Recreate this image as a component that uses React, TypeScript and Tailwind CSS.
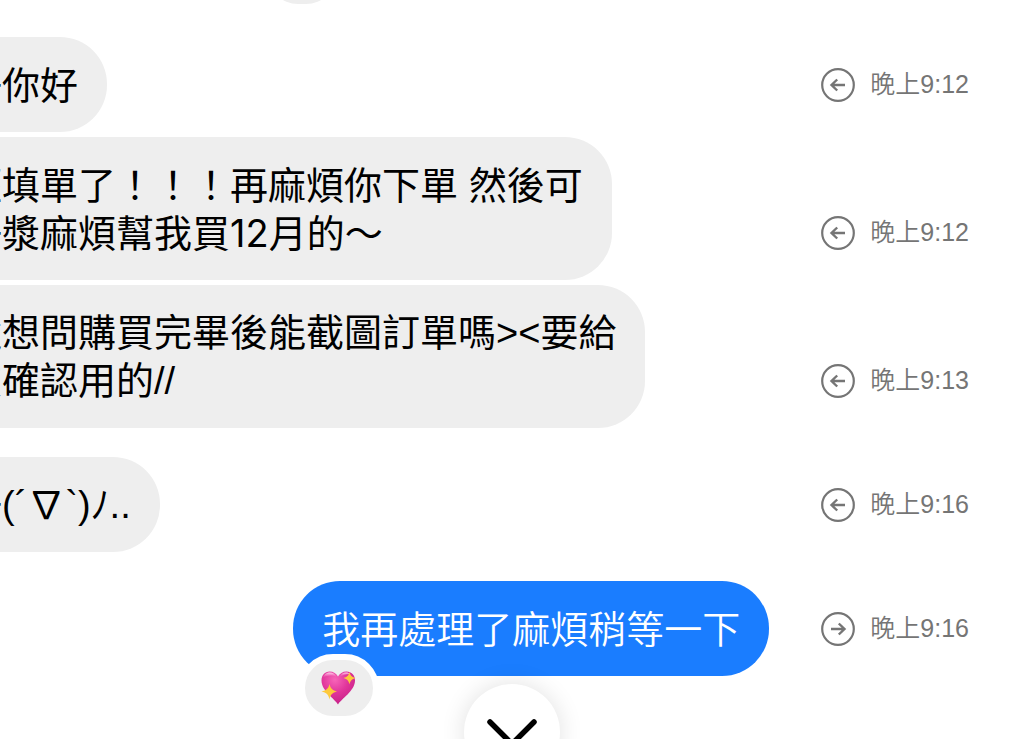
import type { ReactNode } from "react";

type Message = {
  id: number;
  lines: string[];
  time: string;
  isSent: boolean;
  reaction?: ReactNode;
  // space above the row, grouped messages sit closer together
  spacing: string;
  // latin face, kaomoji and symbols need a narrower one
  font: string;
};

const textFont = "font-['Inter','Noto_Sans_CJK_TC',sans-serif]";
const symbolFont = "font-['Liberation_Sans','Noto_Sans_CJK_TC',sans-serif]";

function SparklingHeart() {
  return (
    <svg
      viewBox="0 0 36 36"
      className="h-9 w-9"
      role="img"
      aria-label="sparkling heart"
    >
      <defs>
        <radialGradient id="heart" cx="0.4" cy="0.25" r="0.8">
          <stop offset="0" stopColor="#f765b8" />
          <stop offset="0.5" stopColor="#e0349a" />
          <stop offset="1" stopColor="#c31f86" />
        </radialGradient>
        <linearGradient id="shine" x1="0" y1="0" x2="0" y2="1">
          <stop offset="0" stopColor="#ffd3ee" />
          <stop offset="1" stopColor="#f765b8" stopOpacity="0" />
        </linearGradient>
      </defs>
      <path
        d="M17 34.5C14 29 0.5 21 0.5 10.5C0.5 5 4 1.5 8.5 1.5C12.5 1.5 15.5 3.5 17 6.5C18.5 3.5 21.5 1.5 25.5 1.5C30.5 1.5 34 5 34 10.5C34 21 20 29 17 34.5Z"
        fill="url(#heart)"
      />
      <path
        d="M2 8C3 4 6 2.5 9 2.5C12 2.5 14.5 4.5 15.5 7C12 5 6 5 2 8Z"
        fill="url(#shine)"
      />
      <path
        d="M18.5 7C19.5 4.5 22 2.5 25 2.5C27 2.5 28 3 29 4C25 4 22 5 18.5 7Z"
        fill="url(#shine)"
      />
      <path
        d="M8.5 14C9.5 18.5 11.5 20.5 16 21.5C11.5 22.5 9.5 24.5 8.5 29.5C7.5 24.5 5.5 22.5 0.5 21.5C5.5 20.5 7.5 18.5 8.5 14Z"
        fill="#fdc93b"
      />
      <path
        d="M28.5 2C29.4 5.6 30.7 7 34.5 8C30.7 9 29.4 10.5 28.5 14.5C27.6 10.5 26.3 9 22.5 8C26.3 7 27.6 5.6 28.5 2Z"
        fill="#fdc93b"
      />
    </svg>
  );
}

const messages: Message[] = [
  {
    id: 1,
    lines: ["你好你好"],
    time: "晚上9:12",
    isSent: false,
    spacing: "mt-[33px]",
    font: textFont,
  },
  {
    id: 2,
    lines: ["已經填單了！！！再麻煩你下單 然後可", "以好漿麻煩幫我買12月的～"],
    time: "晚上9:12",
    isSent: false,
    spacing: "mt-[5px]",
    font: textFont,
  },
  {
    id: 3,
    lines: ["我還想問購買完畢後能截圖訂單嗎><要給", "朋友確認用的//"],
    time: "晚上9:13",
    isSent: false,
    spacing: "mt-[5px]",
    font: symbolFont,
  },
  {
    id: 4,
    lines: ["好好(´∇`)ﾉ.."],
    time: "晚上9:16",
    isSent: false,
    spacing: "mt-[29px]",
    font: symbolFont,
  },
  {
    id: 5,
    lines: ["我再處理了麻煩稍等一下"],
    time: "晚上9:16",
    isSent: true,
    reaction: <SparklingHeart />,
    spacing: "mt-[29px]",
    font: textFont,
  },
];

function DirectionIcon({ isSent }: { isSent: boolean }) {
  return (
    <svg
      viewBox="0 0 34 34"
      fill="none"
      stroke="currentColor"
      className="h-[34px] w-[34px]"
      aria-hidden="true"
    >
      <circle cx="17" cy="17" r="15.8" strokeWidth="2.2" />
      <path
        d={
          isSent
            ? "M10 17H23.5M17.8 11.5L23.5 17L17.8 22.5"
            : "M24 17H10.5M16.2 11.5L10.5 17L16.2 22.5"
        }
        strokeWidth="2.4"
      />
    </svg>
  );
}

function MessageRow({ message }: { message: Message }) {
  const { lines, time, isSent, reaction, spacing, font } = message;

  return (
    <li className={`flex items-end ${spacing}`}>
      <div className={`flex flex-1 ${isSent ? "justify-end" : "justify-start"}`}>
        <div
          className={`relative shrink-0 rounded-[47px] px-[29px] pt-6 pb-[23px] text-[38px] leading-[48px] whitespace-pre ${font} ${
            isSent ? "bg-[#1a7dff] font-[350] text-white" : "-ml-[103px] bg-[#eeeeee] text-black"
          }`}
        >
          {lines.map((line) => (
            <p key={line}>{line}</p>
          ))}
          {reaction && (
            <button
              type="button"
              className="absolute top-[73px] left-[6px] flex h-[68px] w-[80px] items-center justify-center rounded-[34px] border-[6px] border-white bg-[#eeeeee]"
            >
              {reaction}
            </button>
          )}
        </div>
      </div>
      <div className="mr-[55px] ml-[52px] flex h-[95px] items-center gap-[15px] text-[#757575]">
        <DirectionIcon isSent={isSent} />
        <time className="pb-[2px] text-[25px] leading-[34px] font-[350] whitespace-nowrap">{time}</time>
      </div>
    </li>
  );
}

function App() {
  return (
    <main
      lang="zh-TW"
      className="relative h-screen overflow-hidden bg-white font-['Liberation_Sans','Noto_Sans_CJK_TC',sans-serif]"
    >
      <div className="flex h-1 items-end pl-[268px]">
        <div className="h-16 w-[68px] shrink-0 rounded-[30px] bg-[#eeeeee]" />
      </div>
      <ul>
        {messages.map((message) => (
          <MessageRow key={message.id} message={message} />
        ))}
      </ul>
      <button
        type="button"
        aria-label="scroll to latest"
        className="absolute -bottom-[41px] left-1/2 flex h-24 w-24 -translate-x-1/2 items-center justify-center rounded-full bg-white shadow-[0_0_24px_rgba(0,0,0,0.12)]"
      >
        <svg
          viewBox="0 0 50 30"
          fill="none"
          stroke="black"
          strokeWidth="5.5"
          strokeLinecap="round"
          strokeLinejoin="round"
          className="mt-1 h-[30px] w-[50px]"
        >
          <path d="M3 3L25 25L47 3" />
        </svg>
      </button>
    </main>
  );
}

export default App;
